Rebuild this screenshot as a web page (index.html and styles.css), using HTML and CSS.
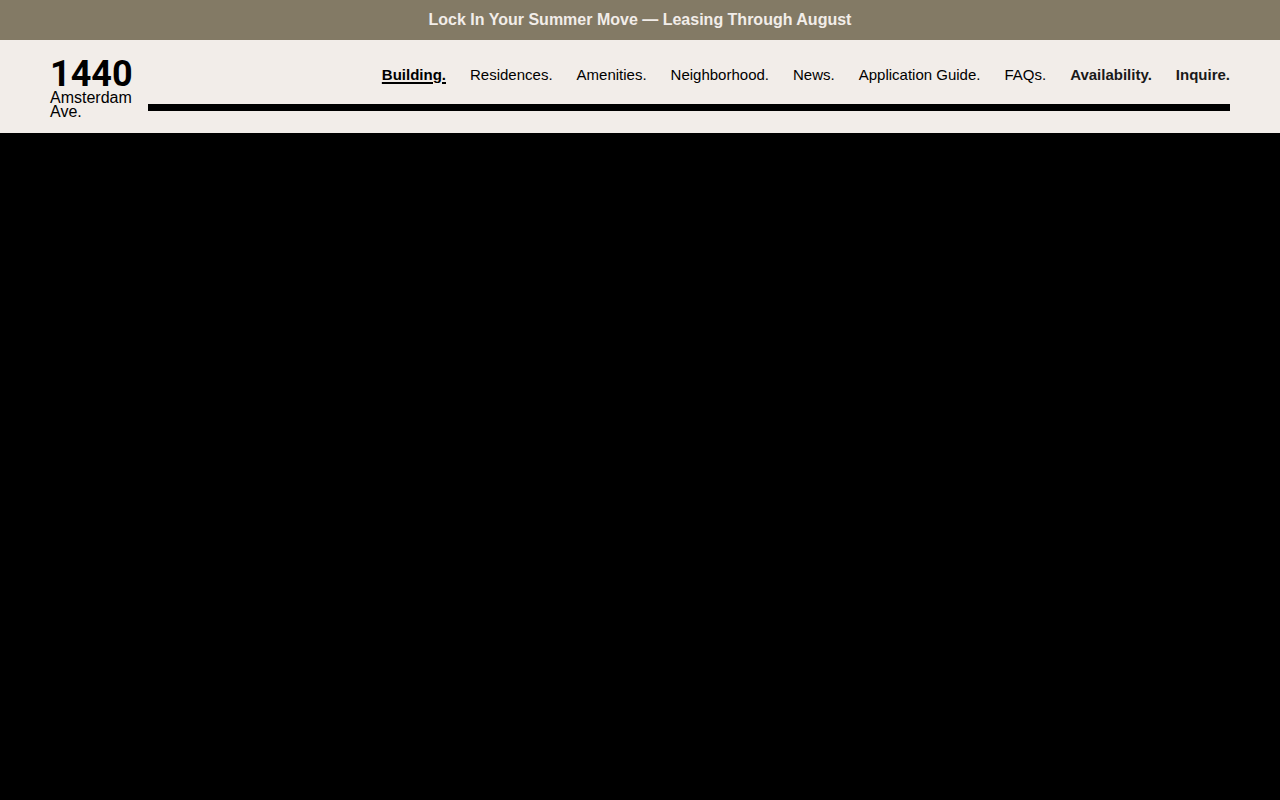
FILE: index.html
```html
<!DOCTYPE html>
<html lang="en">
<head>
<meta charset="utf-8">
<meta name="viewport" content="width=device-width, initial-scale=1">
<title>1440 Amsterdam Ave.</title>
<link rel="stylesheet" href="styles.css">
</head>
<body>
<a class="banner" href="#availability">Lock In Your Summer Move — Leasing Through August</a>
<header class="header">
  <a class="logo" href="#home">
    <span class="logo-number">1440</span>
    <span class="logo-street">Amsterdam<br>Ave.</span>
  </a>
  <div class="header-main">
    <nav class="nav" aria-label="Main">
      <a class="nav-link nav-current" href="#building" aria-current="page">Building.</a>
      <a class="nav-link" href="#residences">Residences.</a>
      <a class="nav-link" href="#amenities">Amenities.</a>
      <a class="nav-link" href="#neighborhood">Neighborhood.</a>
      <a class="nav-link" href="#news">News.</a>
      <a class="nav-link" href="#application-guide">Application Guide.</a>
      <a class="nav-link" href="#faqs">FAQs.</a>
      <a class="nav-link nav-strong" href="#availability">Availability.</a>
      <a class="nav-link nav-strong" href="#inquire">Inquire.</a>
    </nav>
    <div class="rule"></div>
  </div>
</header>
<main class="hero"></main>
</body>
</html>
```
FILE: styles.css
```css
* {
  box-sizing: border-box;
}

body {
  margin: 0;
  min-height: 100vh;
  display: flex;
  flex-direction: column;
  background: #f2ede9;
  color: #000;
  font-family: "Liberation Sans", Arial, sans-serif;
}

a {
  color: inherit;
  text-decoration: none;
}

.banner {
  padding: 10px 24px;
  background: #837a65;
  color: #f2ede9;
  font-size: 16px;
  font-weight: 700;
  line-height: 20px;
  text-align: center;
}

.header {
  display: flex;
  gap: 15px;
  padding: 20px 50px 14px;
}

.logo {
  display: flex;
  flex-direction: column;
  gap: 3px;
}

.logo-number {
  font-family: Roboto, "Liberation Sans", sans-serif;
  font-size: 36px;
  font-weight: 700;
  line-height: 28px;
}

.logo-street {
  font-size: 16px;
  line-height: 14px;
}

.header-main {
  flex: 1;
}

.nav {
  display: flex;
  justify-content: flex-end;
  gap: 24px;
  padding: 5px 0 19px;
}

.nav-link {
  font-size: 15px;
  line-height: 20px;
  white-space: nowrap;
}

.nav-current {
  font-weight: 700;
  text-decoration: underline;
  text-decoration-thickness: 2px;
  text-underline-offset: 2px;
}

.nav-strong {
  color: #1a1a1a;
  font-weight: 700;
}

.rule {
  height: 7px;
  background: #000;
}

.hero {
  flex: 1;
  background: #000;
}
```
